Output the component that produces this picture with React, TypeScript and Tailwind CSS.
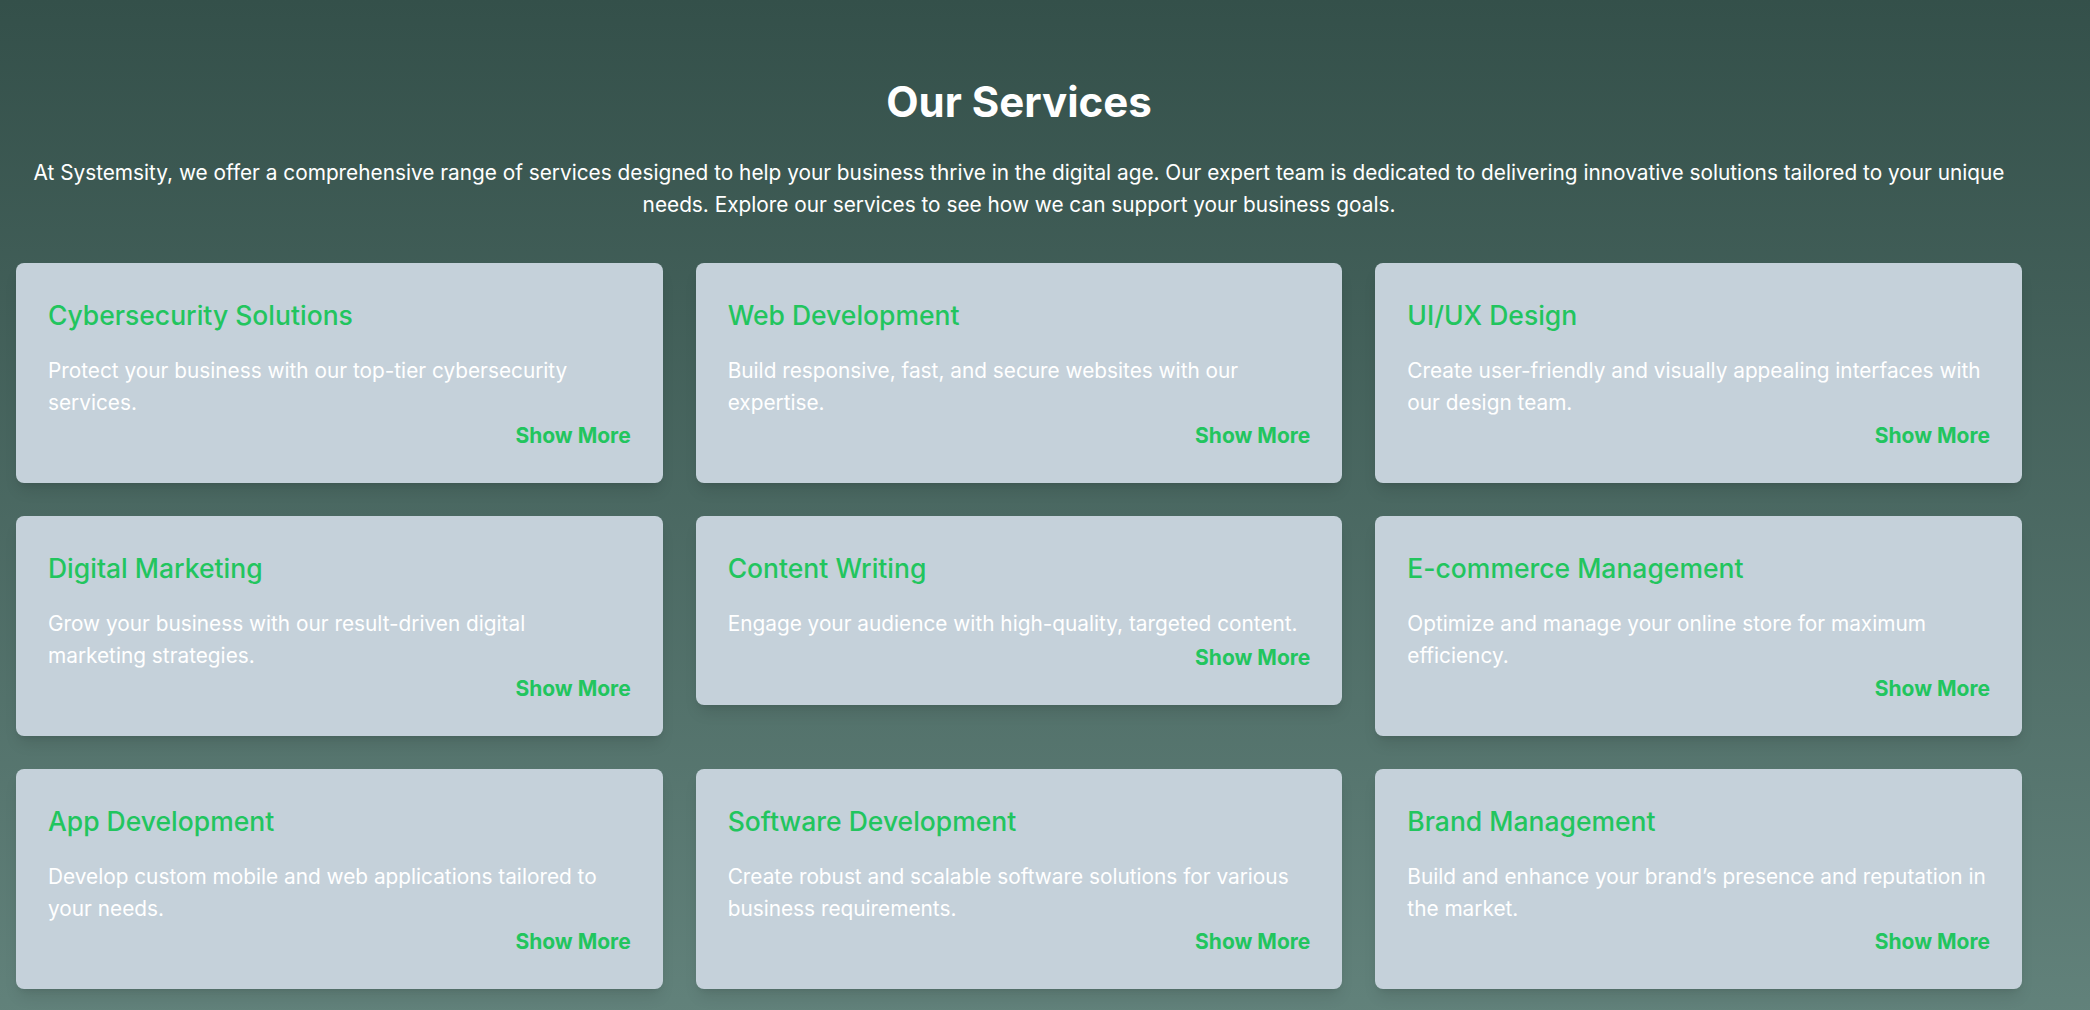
const services = [
  {
    title: "Cybersecurity Solutions",
    text: "Protect your business with our top-tier cybersecurity services.",
  },
  {
    title: "Web Development",
    text: "Build responsive, fast, and secure websites with our expertise.",
  },
  {
    title: "UI/UX Design",
    text: "Create user-friendly and visually appealing interfaces with our design team.",
  },
  {
    title: "Digital Marketing",
    text: "Grow your business with our result-driven digital marketing strategies.",
  },
  {
    title: "Content Writing",
    text: "Engage your audience with high-quality, targeted content.",
  },
  {
    title: "E-commerce Management",
    text: "Optimize and manage your online store for maximum efficiency.",
  },
  {
    title: "App Development",
    text: "Develop custom mobile and web applications tailored to your needs.",
  },
  {
    title: "Software Development",
    text: "Create robust and scalable software solutions for various business requirements.",
  },
  {
    title: "Brand Management",
    text: "Build and enhance your brand\u2019s presence and reputation in the market.",
  },
];

function ServiceCard({ title, text }: { title: string; text: string }) {
  return (
    <div className="rounded-lg bg-[#c5d1da] p-8 shadow-lg">
      <h3 className="mb-5 text-[26.5px] leading-10 font-medium text-[#22c55e]">
        {title}
      </h3>
      <p className="pr-[3px] text-[20.8px] leading-[31.5px] text-white">
        {text}
      </p>
      <div className="mt-[3px] flex justify-end">
        <button className="text-[21px] leading-[30px] font-bold text-[#22c55e]">
          Show More
        </button>
      </div>
    </div>
  );
}

export default function App() {
  return (
    <section
      className="min-h-screen bg-gradient-to-b from-[#34504a] to-[#62827b] pt-[70px] pb-8"
      style={{ fontFamily: "Inter, 'Noto Sans', sans-serif" }}
    >
      <div className="ml-4 w-[2006px]">
        <h2 className="mb-6 text-center text-[42px] leading-[63px] font-bold text-white">
          Our Services
        </h2>
        <p className="mx-auto text-center text-[20.8px] leading-8 text-white">
          At Systemsity, we offer a comprehensive range of services designed to
          help your business thrive in the digital age. Our expert team is
          dedicated to delivering innovative solutions tailored to your unique
          needs. Explore our services to see how we can support your business
          goals.
        </p>
        <div className="mt-[42px] grid grid-cols-3 items-start gap-[33px]">
          {services.map((service) => (
            <ServiceCard key={service.title} {...service} />
          ))}
        </div>
      </div>
    </section>
  );
}
